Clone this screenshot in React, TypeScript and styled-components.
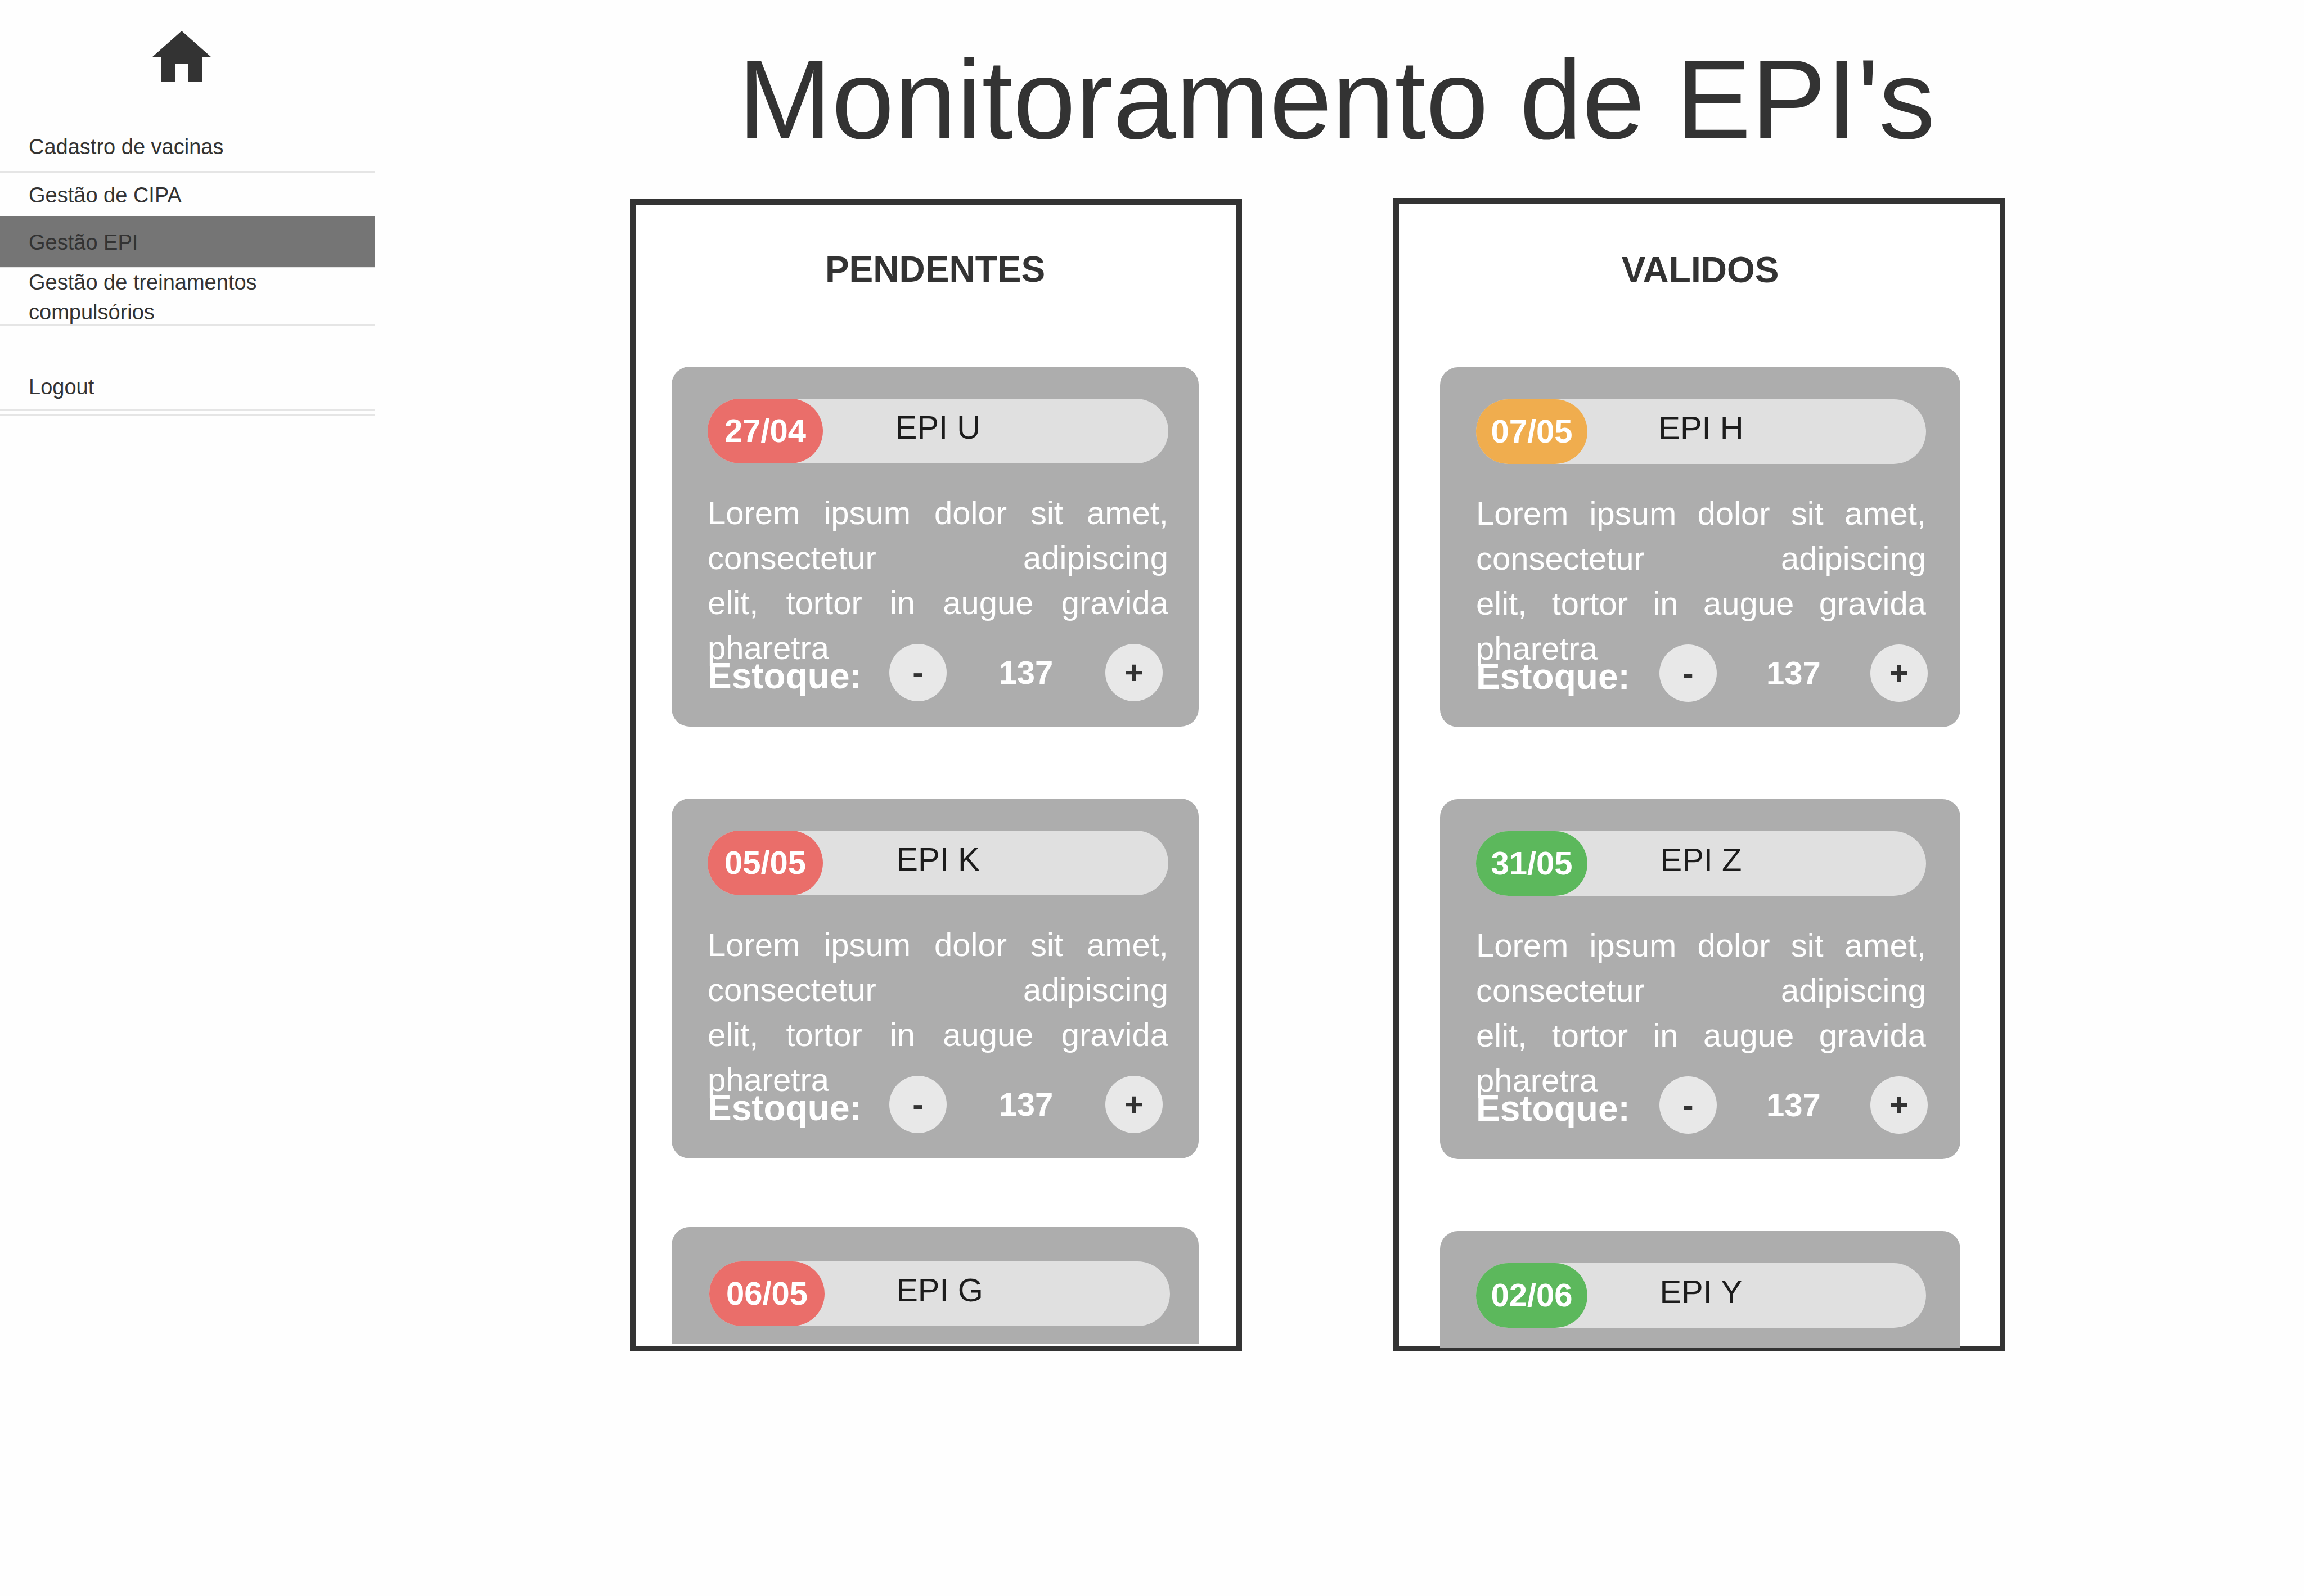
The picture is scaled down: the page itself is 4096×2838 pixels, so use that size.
import React, { useState } from 'react';
import styled, { createGlobalStyle } from 'styled-components';

const GlobalStyle = createGlobalStyle`
  *, *::before, *::after { box-sizing: border-box; }
  body {
    margin: 0;
    background: #fefefe;
    color: #333333;
    font-family: Arial, "Liberation Sans", sans-serif;
  }
  h1, h2, p, ul { margin: 0; padding: 0; }
  ul { list-style: none; }
  a { color: inherit; text-decoration: none; }
`;

const Page = styled.div`
  display: grid;
  grid-template-columns: 333fr 1715fr;
  min-height: 100vh;
`;

/* Sidebar */

const Sidebar = styled.nav``;

const HomeLink = styled.a`
  display: block;
  padding: 55px 0 0 270px;

  svg {
    display: block;
    width: 106px;
    height: 91px;
    fill: #333333;
  }
`;

const Menu = styled.ul`
  padding-bottom: 6px;
  border-bottom: 3px solid #e5e5e5;
`;

interface MenuRowProps {
  $height: number;
  $bottom: number;
  $divider: boolean;
  $active: boolean;
  $wrap: boolean;
}

const MenuRow = styled.li<MenuRowProps>`
  display: flex;
  align-items: ${(p) => (p.$wrap ? 'center' : 'flex-end')};
  height: ${(p) => p.$height}px;
  padding: 4px 51px ${(p) => p.$bottom}px;
  border-bottom: ${(p) => (p.$divider ? '3px solid #e5e5e5' : 'none')};
  background: ${(p) => (p.$active ? '#757575' : 'transparent')};
  font-size: 38px;
  line-height: 53px;
`;

interface MenuItem {
  label: string;
  height: number;
  bottom: number;
  divider?: boolean;
  active?: boolean;
  wrap?: boolean;
}

const menuItems: MenuItem[] = [
  { label: 'Cadastro de vacinas', height: 161, bottom: 16, divider: true },
  { label: 'Gestão de CIPA', height: 77, bottom: 10 },
  { label: 'Gestão EPI', height: 93, bottom: 16, divider: true, active: true },
  { label: 'Gestão de treinamentos compulsórios', height: 102, bottom: 0, divider: true, wrap: true },
  { label: 'Logout', height: 151, bottom: 12, divider: true },
];

/* Main area */

const Main = styled.main`
  padding: 65px 0;
`;

const Title = styled.h1`
  padding-right: 10px;
  font-size: 200px;
  font-weight: 400;
  line-height: 224px;
  text-align: center;
`;

const Board = styled.div`
  display: grid;
  grid-template-columns: 454fr 1088fr 269fr 1088fr 531fr;
  align-items: end;
  margin-top: 63px;
`;

const Panel = styled.section<{ $column: number; $top: number; $left: number; $right: number }>`
  grid-column: ${(p) => p.$column};
  padding: ${(p) => p.$top}px ${(p) => p.$right}px 0 ${(p) => p.$left}px;
  border: 10px solid #333333;
  background: #ffffff;
`;

const PanelTitle = styled.h2`
  font-size: 64px;
  font-weight: 700;
  line-height: 80px;
  text-align: center;
`;

const CardList = styled.div<{ $lastGap: number; $end: number }>`
  display: flex;
  flex-direction: column;
  gap: ${(p) => p.$lastGap}px;
  margin-top: 133px;
  margin-bottom: ${(p) => p.$end}px;
`;

const CardGroup = styled.div`
  display: flex;
  flex-direction: column;
  gap: 128px;
`;

const Card = styled.article<{ $right: number }>`
  padding: 57px ${(p) => p.$right}px 45px 64px;
  border-radius: 32px;
  background: #adadad;
  color: #ffffff;
`;

const CutCard = styled.article<{ $padding: string }>`
  padding: ${(p) => p.$padding};
  border-radius: 32px 32px 0 0;
  background: #adadad;
  color: #ffffff;
`;

const Bar = styled.header`
  display: grid;
  height: 115px;
  border-radius: 58px;
  background: #e0e0e0;
`;

const statusColors = { late: '#ea6e6a', soon: '#f0ad4e', ok: '#5cb85c' };
type Status = keyof typeof statusColors;

const DateBadge = styled.time<{ $status: Status; $width: number }>`
  grid-area: 1 / 1;
  width: ${(p) => p.$width}px;
  border-radius: 58px;
  background: ${(p) => statusColors[p.$status]};
  font-size: 58px;
  font-weight: 700;
  line-height: 114px;
  text-align: center;
`;

const ItemName = styled.span`
  grid-area: 1 / 1;
  justify-self: center;
  color: #1c1c1c;
  font-size: 58px;
  line-height: 102px;
`;

const Description = styled.p`
  margin-top: 48px;
  font-size: 58px;
  line-height: 80px;
  text-align: justify;
`;

const StockRow = styled.div<{ $label: number; $end: number }>`
  display: grid;
  grid-template-columns: ${(p) => p.$label}px 102px 1fr 102px;
  align-items: end;
  margin-top: -47px;
  margin-right: ${(p) => p.$end}px;
`;

const StockLabel = styled.label`
  font-size: 64px;
  font-weight: 700;
  line-height: 90px;
`;

const StockValue = styled.output`
  font-size: 58px;
  font-weight: 700;
  line-height: 102px;
  text-align: center;
`;

const RoundButton = styled.button`
  height: 102px;
  padding: 0;
  border: 0;
  border-radius: 50%;
  background: #e8e8e8;
  color: #333333;
  font-family: inherit;
  font-size: 58px;
  font-weight: 700;
  line-height: 102px;
  text-align: center;
  cursor: pointer;
`;

interface Item {
  date: string;
  name: string;
  status: Status;
}

interface Column {
  title: string;
  column: number;
  top: number;
  left: number;
  right: number;
  cardRight: number;
  badge: number;
  stockLabel: number;
  stockEnd: number;
  lastGap: number;
  end: number;
  cutPadding: string;
  items: Item[];
  last: Item;
}

const columns: Column[] = [
  {
    title: 'PENDENTES',
    column: 2,
    top: 75,
    left: 64,
    right: 67,
    cardRight: 54,
    badge: 205,
    stockLabel: 323,
    stockEnd: 10,
    lastGap: 122,
    end: 3,
    cutPadding: '61px 51px 32px 67px',
    items: [
      { date: '27/04', name: 'EPI U', status: 'late' },
      { date: '05/05', name: 'EPI K', status: 'late' },
    ],
    last: { date: '06/05', name: 'EPI G', status: 'late' },
  },
  {
    title: 'VALIDOS',
    column: 4,
    top: 78,
    left: 73,
    right: 70,
    cardRight: 61,
    badge: 198,
    stockLabel: 326,
    stockEnd: -3,
    lastGap: 128,
    end: -4,
    cutPadding: '57px 61px 36px 64px',
    items: [
      { date: '07/05', name: 'EPI H', status: 'soon' },
      { date: '31/05', name: 'EPI Z', status: 'ok' },
    ],
    last: { date: '02/06', name: 'EPI Y', status: 'ok' },
  },
];

function ItemBar({ item, badge }: { item: Item; badge: number }) {
  return (
    <Bar>
      <DateBadge $status={item.status} $width={badge}>{item.date}</DateBadge>
      <ItemName>{item.name}</ItemName>
    </Bar>
  );
}

function ItemCard({ item, column }: { item: Item; column: Column }) {
  const [stock, setStock] = useState(137);
  const id = `estoque-${item.name.replace(' ', '-')}`;
  return (
    <Card $right={column.cardRight}>
      <ItemBar item={item} badge={column.badge} />
      <Description>
        Lorem ipsum dolor sit amet, consectetur adipiscing elit,&nbsp;tortor in augue gravida pharetra
      </Description>
      <StockRow $label={column.stockLabel} $end={column.stockEnd}>
        <StockLabel htmlFor={id}>Estoque:</StockLabel>
        <RoundButton type="button" onClick={() => setStock(Math.max(0, stock - 1))}>-</RoundButton>
        <StockValue id={id}>{stock}</StockValue>
        <RoundButton type="button" onClick={() => setStock(stock + 1)}>+</RoundButton>
      </StockRow>
    </Card>
  );
}

export default function App() {
  return (
    <>
      <GlobalStyle />
      <Page>
        <Sidebar>
          <HomeLink href="#">
            <svg viewBox="0 0 106 91" aria-hidden="true">
              <path d="M53 0 106 47H90V91H64V58H42V91H16V47H0Z" />
            </svg>
          </HomeLink>
          <Menu>
            {menuItems.map((m) => (
              <MenuRow
                key={m.label}
                $height={m.height}
                $bottom={m.bottom}
                $divider={!!m.divider}
                $active={!!m.active}
                $wrap={!!m.wrap}
              >
                <a href="#">{m.label}</a>
              </MenuRow>
            ))}
          </Menu>
        </Sidebar>
        <Main>
          <Title>Monitoramento de EPI's</Title>
          <Board>
            {columns.map((c) => (
              <Panel key={c.title} $column={c.column} $top={c.top} $left={c.left} $right={c.right}>
                <PanelTitle>{c.title}</PanelTitle>
                <CardList $lastGap={c.lastGap} $end={c.end}>
                  <CardGroup>
                    {c.items.map((item) => (
                      <ItemCard key={item.name} item={item} column={c} />
                    ))}
                  </CardGroup>
                  <CutCard $padding={c.cutPadding}>
                    <ItemBar item={c.last} badge={c.badge} />
                  </CutCard>
                </CardList>
              </Panel>
            ))}
          </Board>
        </Main>
      </Page>
    </>
  );
}
